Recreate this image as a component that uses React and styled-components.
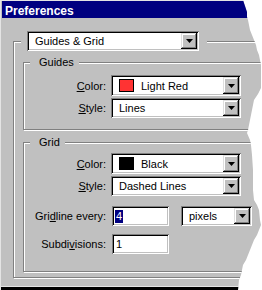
import React from "react";
import styled, { createGlobalStyle } from "styled-components";

const tear =
  "polygon(0 0, 243px 0, 245px 6px, 247px 12px, 247px 17px, 248px 20px, 250px 30px, 252px 35px, 254px 40px, 256px 45px, 257px 50px, 259px 55px, 260px 60px, 261px 65px, 261px 88px, 258px 94px, 254px 100px, 252px 110px, 250px 120px, 249px 125px, 248px 130px, 247px 133px, 250px 140px, 251px 145px, 252px 155px, 253px 170px, 253px 190px, 254px 200px, 257px 205px, 259px 210px, 260px 220px, 261px 225px, 259px 230px, 257px 235px, 254px 240px, 252px 245px, 250px 250px, 248px 255px, 246px 260px, 243px 265px, 242px 270px, 241px 275px, 239px 280px, 238px 290px, 0 290px)";

const GlobalStyle = createGlobalStyle`
  html, body { margin: 0; padding: 0; background: #fff; overflow: hidden; }
  body { font-family: "Liberation Sans", Arial, sans-serif; font-size: 11px; color: #000; }
  #root { width: 262px; height: 290px; }
`;

const Window = styled.div`
  width: 262px;
  height: 290px;
  box-sizing: border-box;
  padding: 1px 0 0 2px;
  background: #c0c0c0;
  overflow: hidden;
  clip-path: ${tear};
  box-shadow: inset 1px 1px 0 #e4e4e4, inset 0 -3px 0 #000, inset 0 -4px 0 #e4e4e4;
  display: flex;
  flex-direction: column;
`;

const TitleBar = styled.div`
  height: 17px;
  flex-shrink: 0;
  margin-right: -20px;
  box-sizing: border-box;
  padding: 2px 0 0 3px;
  background: #000080;
  color: #fff;
  font-weight: bold;
  font-size: 12px;
  display: flex;
  align-items: center;
`;

const Group = styled.fieldset`
  margin: ${(p) => p.$margin};
  padding: 0;
  min-inline-size: 0;
  border: 1px solid #808080;
  box-shadow: inset 1px 1px 0 #fff, 1px 1px 0 #fff;
`;

const Legend = styled.legend`
  margin-left: ${(p) => p.$ml}px;
  padding: ${(p) => p.$pad};
  background: #c0c0c0;
  font-size: 11px;
  line-height: 13px;
`;

const GroupBody = styled.div`
  display: flex;
  flex-direction: column;
  padding: ${(p) => p.$pad};
`;

const Row = styled.div`
  display: flex;
  align-items: center;
  margin-top: ${(p) => p.$mt || 0}px;
`;

const Label = styled.label`
  width: 82px;
  flex-shrink: 0;
  margin-right: 5px;
  text-align: right;
  white-space: nowrap;
`;

const Sunken = styled.div`
  display: flex;
  align-items: center;
  box-sizing: border-box;
  width: ${(p) => p.$w}px;
  height: ${(p) => p.$h}px;
  flex-shrink: 0;
  margin-left: ${(p) => p.$ml || 0}px;
  padding: 2px;
  background: #fff;
  box-shadow: inset 1px 1px 0 #808080, inset -1px -1px 0 #fff, inset 2px 2px 0 #000,
    inset -2px -2px 0 #c0c0c0;
`;

const Value = styled.div`
  flex: 1;
  min-width: 0;
  display: flex;
  align-items: center;
  padding-left: ${(p) => p.$pl ?? 6}px;
  white-space: nowrap;
  overflow: hidden;
`;

const DropButton = styled.div`
  width: 16px;
  align-self: stretch;
  flex-shrink: 0;
  background: #c0c0c0;
  display: flex;
  align-items: center;
  justify-content: center;
  box-shadow: inset -1px -1px 0 #000, inset 1px 1px 0 #dfdfdf, inset -2px -2px 0 #808080,
    inset 2px 2px 0 #fff;
`;

const Swatch = styled.span`
  width: 15px;
  height: 13px;
  box-sizing: border-box;
  border: 1px solid #000;
  background: ${(p) => p.$color};
  margin-right: 7px;
  flex-shrink: 0;
`;

const Selected = styled.span`
  background: #000080;
  color: #fff;
  line-height: 13px;
  padding: 0 1px;
`;

const Arrow = () => (
  <svg width="7" height="4" viewBox="0 0 7 4">
    <path d="M0 0h7L3.5 4z" fill="#000" />
  </svg>
);

const Select = ({ w, h, ml, swatch, children }) => (
  <Sunken $w={w} $h={h} $ml={ml}>
    <Value>
      {swatch && <Swatch $color={swatch} />}
      {children}
    </Value>
    <DropButton>
      <Arrow />
    </DropButton>
  </Sunken>
);

export default function App() {
  return (
    <>
      <GlobalStyle />
      <Window>
        <TitleBar>Preferences</TitleBar>
        <Group $margin="13px -30px 0 11px">
          <Legend $ml={7} $pad="0 8px 0 6px">
            <Select w={172} h={20}>Guides &amp; Grid</Select>
          </Legend>
          <GroupBody $pad="5px 0 5px 9px">
            <Group $margin="0 -20px 0 0">
              <Legend $ml={6} $pad="0 5px 0 9px">Guides</Legend>
              <GroupBody $pad="6px 0 11px 0">
                <Row>
                  <Label><u>C</u>olor:</Label>
                  <Select w={130} h={21} swatch="#ff3333">Light Red</Select>
                </Row>
                <Row $mt={2}>
                  <Label><u>S</u>tyle:</Label>
                  <Select w={130} h={20}>Lines</Select>
                </Row>
              </GroupBody>
            </Group>
            <Group $margin="6px -20px 0 0">
              <Legend $ml={6} $pad="0 5px 0 9px">Grid</Legend>
              <GroupBody $pad="4px 0 17px 0">
                <Row>
                  <Label><u>C</u>olor:</Label>
                  <Select w={130} h={21} swatch="#000">Black</Select>
                </Row>
                <Row $mt={2}>
                  <Label><u>S</u>tyle:</Label>
                  <Select w={130} h={20}>Dashed Lines</Select>
                </Row>
                <Row $mt={10}>
                  <Label>Gri<u>d</u>line every:</Label>
                  <Sunken $w={57} $h={20} $ml={1}>
                    <Value $pl={1}>
                      <Selected>4</Selected>
                    </Value>
                  </Sunken>
                  <Select w={71} h={20} ml={12}>pixels</Select>
                </Row>
                <Row $mt={8}>
                  <Label>Subdi<u>v</u>isions:</Label>
                  <Sunken $w={57} $h={20} $ml={1}>
                    <Value $pl={2}>1</Value>
                  </Sunken>
                </Row>
              </GroupBody>
            </Group>
          </GroupBody>
        </Group>
      </Window>
    </>
  );
}
